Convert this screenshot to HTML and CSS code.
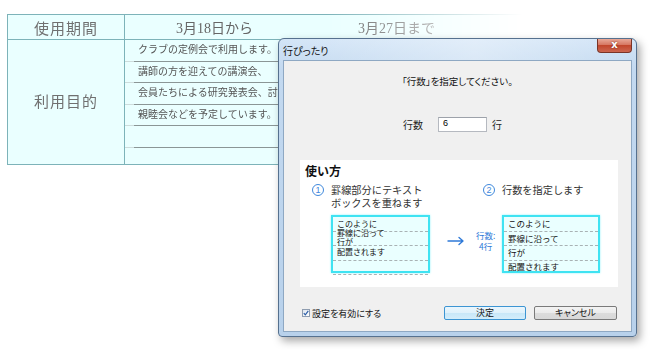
FILE: index.html
```html
<!DOCTYPE html>
<html lang="ja">
<head>
    <meta charset="UTF-8">
    <title>行ぴったり</title>
    <link rel="stylesheet" href="styles.css">
</head>
<body>
    <div class="page">
        <div class="sheet">
            <div class="cell head">使用期間</div>
            <div class="cell period">
                <span class="from">3月18日から</span>
                <span class="to">3月27日まで</span>
            </div>
            <div class="cell head purpose">利用目的</div>
            <div class="cell lines">
                <div class="ruled"><span>クラブの定例会で利用します。</span></div>
                <div class="ruled"><span>講師の方を迎えての講演会、</span></div>
                <div class="ruled"><span>会員たちによる研究発表会、討論会、</span></div>
                <div class="ruled"><span>親睦会などを予定しています。</span></div>
                <div class="ruled"><span></span></div>
            </div>
        </div>

        <div class="dialog">
            <div class="titlebar">
                <span class="title">行ぴったり</span>
                <span class="close">x</span>
            </div>
            <div class="client">
                <div class="prompt">「行数」を指定してください。</div>

                <div class="count-row">
                    <span class="count-label">行数</span>
                    <input class="count-input" type="text" value="6">
                    <span class="count-unit">行</span>
                </div>

                <div class="howto">
                    <div class="howto-title">使い方</div>
                    <div class="steps">
                        <div class="step step-1">
                            <span class="num">1</span>
                            <span class="step-text">罫線部分にテキスト<br>ボックスを重ねます</span>
                        </div>
                        <div class="step step-2">
                            <span class="num">2</span>
                            <span class="step-text">行数を指定します</span>
                        </div>
                    </div>
                    <div class="demo">
                        <div class="box box-before">
                            <div class="box-row"></div>
                            <div class="box-row"></div>
                            <div class="box-row"></div>
                            <div class="box-row"></div>
                            <div class="box-overlay">このように<br>罫線に沿って<br>行が<br>配置されます</div>
                        </div>
                        <div class="arrow">
                            <svg width="18" height="10" viewBox="0 0 18 10">
                                <path d="M1 5h15M12 1.5l4 3.5-4 3.5" fill="none" stroke="#2f7ad8" stroke-width="1.4" stroke-linecap="round" stroke-linejoin="round"/>
                            </svg>
                            <div class="arrow-label">行数:<br>4行</div>
                        </div>
                        <div class="box box-after">
                            <div class="box-row">このように</div>
                            <div class="box-row">罫線に沿って</div>
                            <div class="box-row">行が</div>
                            <div class="box-row">配置されます</div>
                        </div>
                    </div>
                </div>

                <div class="actions">
                    <label class="enable">
                        <span class="checkbox">
                            <svg width="6" height="6" viewBox="0 0 6 6">
                                <path d="M0.8 3.2l1.5 1.6 3-4" fill="none" stroke="#2c5ea8" stroke-width="1.2"/>
                            </svg>
                        </span>
                        設定を有効にする
                    </label>
                    <button class="btn btn-ok">決定</button>
                    <button class="btn btn-cancel">キャンセル</button>
                </div>
            </div>
        </div>
    </div>
</body>
</html>
```

FILE: styles.css
```css
* {
    margin: 0;
    padding: 0;
    box-sizing: border-box;
}

body {
    background: #fff;
    font-family: "Noto Sans CJK JP", sans-serif;
    color: #222;
}

.page {
    position: relative;
    width: 650px;
    height: 350px;
    overflow: hidden;
    padding: 14px 0 0 7px;
}

/* the paper form behind the dialog */
.sheet {
    width: 520px;
    display: grid;
    grid-template-columns: 117px 1fr;
    grid-template-rows: 25px 124px;
    border: 1px solid #7db3b9;
    border-right: none;
    background: #eaffff;
    font-family: "Liberation Serif", "Noto Sans CJK JP", serif;
    color: #666;
    -webkit-mask-image: linear-gradient(90deg, #000 0, #000 320px, transparent 515px);
    mask-image: linear-gradient(90deg, #000 0, #000 320px, transparent 515px);
}

.cell.head {
    border-right: 1px solid #7db3b9;
    display: flex;
    align-items: center;
    justify-content: center;
    font-size: 15px;
    letter-spacing: 1px;
    color: #707070;
}

.cell.head:first-child,
.period {
    border-bottom: 1px solid #7db3b9;
}

.purpose {
    padding-bottom: 4px;
}

.period {
    display: flex;
    align-items: center;
    padding-left: 51px;
    font-size: 14px;
}

.period .from {
    width: 182px;
}

.ruled {
    height: 21.5px;
    padding-left: 9px;
    background: linear-gradient(#cddcdc, #cddcdc) left bottom / 9px 1px no-repeat;
}

.ruled span {
    display: block;
    height: 100%;
    border-bottom: 1px solid #8b9696;
    padding: 4px 0 0 4px;
    font-size: 10px;
    line-height: 12px;
    color: #555;
    white-space: nowrap;
    overflow: hidden;
}

/* dialog window */
.dialog {
    position: absolute;
    left: 278px;
    top: 38px;
    width: 359px;
    height: 299px;
    border: 1px solid #56718f;
    border-radius: 6px 6px 4px 4px;
    background: linear-gradient(180deg, #d3e5f7 0, #c3d9f0 30px, #b8d1eb 100%);
    box-shadow: 3px 4px 9px rgba(0, 0, 0, 0.35);
    padding: 0 4px 4px 4px;
    display: flex;
    flex-direction: column;
}

.titlebar {
    height: 21px;
    display: flex;
    align-items: center;
    background: linear-gradient(90deg, rgba(255, 255, 255, 0) 0, rgba(255, 255, 255, 0.35) 55%, rgba(255, 255, 255, 0) 100%);
}

.title {
    font-size: 10px;
    font-feature-settings: "palt";
    color: #111;
    padding-top: 1px;
}

.close {
    position: absolute;
    top: 0;
    right: 4px;
    width: 35px;
    height: 14px;
    border: 1px solid #7a3427;
    border-top: none;
    border-radius: 0 0 4px 4px;
    background: linear-gradient(180deg, #e9a999 0, #d67762 45%, #c2472d 50%, #cc6650 100%);
    color: #fff;
    font-family: "DejaVu Sans", sans-serif;
    font-weight: bold;
    font-size: 10px;
    line-height: 12px;
    text-align: center;
    text-shadow: 0 0 2px #6a2216;
}

.client {
    flex: 1;
    background: #f0f0f0;
    border: 1px solid #8ea8c3;
}

.prompt {
    margin-top: 14px;
    text-align: center;
    font-size: 9.5px;
    line-height: 12px;
    font-feature-settings: "palt";
    color: #111;
}

.count-row {
    margin-top: 30px;
    height: 15px;
    display: flex;
    align-items: center;
    padding-left: 119px;
    font-size: 10px;
    font-feature-settings: "palt";
}

.count-label {
    width: 35px;
}

.count-input {
    width: 49px;
    height: 15px;
    border: 1px solid #b5b9c0;
    border-top-color: #9da2aa;
    background: #fff;
    font-family: "Liberation Sans", sans-serif;
    font-size: 9px;
    padding: 0 0 3px 4px;
    outline: none;
}

.count-unit {
    margin-left: 5px;
}

/* usage panel */
.howto {
    margin: 28px 0 0 16px;
    width: 318px;
    height: 127px;
    background: #fff;
    padding-top: 5px;
}

.howto-title {
    padding-left: 5px;
    font-size: 12px;
    line-height: 12px;
    font-weight: bold;
    color: #111;
}

.steps {
    display: flex;
    margin-top: 6px;
    padding-left: 12px;
    height: 32px;
}

.step {
    display: flex;
    align-items: flex-start;
}

.step-1 {
    width: 171px;
}

.num {
    width: 12px;
    height: 12px;
    border: 1px solid #3f88dc;
    border-radius: 50%;
    color: #3f88dc;
    font-family: "Liberation Sans", sans-serif;
    font-size: 9px;
    line-height: 10px;
    text-align: center;
    margin-top: 1px;
}

.step-text {
    margin-left: 7px;
    font-size: 10.2px;
    line-height: 13px;
    color: #333;
}

.demo {
    display: flex;
    padding-left: 31px;
}

.box {
    position: relative;
    width: 99px;
    height: 58px;
    border: 2px solid #3fe3f2;
    box-shadow: 0 0 2px #8ff3fb;
    background: #eaffff;
}

.box-after {
    width: 98px;
}

.box-row {
    height: 14.5px;
    border-bottom: 1px dashed #a9b2b4;
    font-size: 8.5px;
    line-height: 13.5px;
    padding-left: 4px;
    color: #111;
}

.box-row:last-of-type {
    height: 10px;
    border-bottom: none;
}

.box-after .box-row:last-of-type {
    line-height: 10px;
}

.box-overlay {
    position: absolute;
    top: 2px;
    left: 4px;
    font-size: 8px;
    line-height: 9.2px;
    color: #111;
}

.arrow {
    width: 72px;
    display: flex;
    align-items: center;
    gap: 11px;
    padding: 9px 0 0 17px;
    height: 42px;
}

.arrow svg {
    display: block;
}

.arrow-label {
    font-size: 8.5px;
    line-height: 11px;
    color: #2f7ad8;
    text-align: center;
}

/* bottom buttons */
.actions {
    margin-top: 19px;
    display: flex;
    align-items: center;
    padding: 0 14px 0 18px;
    height: 14px;
}

.enable {
    display: flex;
    align-items: center;
    font-size: 9px;
    font-feature-settings: "palt";
    color: #111;
}

.checkbox {
    width: 8px;
    height: 8px;
    border: 1px solid #8f9db0;
    background: linear-gradient(135deg, #dfe6ee, #fff);
    display: flex;
    align-items: center;
    justify-content: center;
    margin-right: 2px;
}

.btn {
    height: 14px;
    border-radius: 2px;
    font-family: "Noto Sans CJK JP", sans-serif;
    font-size: 9px;
    font-feature-settings: "palt";
    line-height: 12px;
    color: #111;
}

.btn-ok {
    margin-left: auto;
    width: 82px;
    border: 1px solid #3d95d3;
    background: linear-gradient(180deg, #eaf6fd 0, #dff1fb 50%, #c8e7f8 51%, #d4edfb 100%);
}

.btn-cancel {
    margin-left: 8px;
    width: 83px;
    border: 1px solid #7a7a7a;
    background: linear-gradient(180deg, #f3f3f3 0, #ebebeb 50%, #dcdcdc 51%, #d8d8d8 100%);
}
```
